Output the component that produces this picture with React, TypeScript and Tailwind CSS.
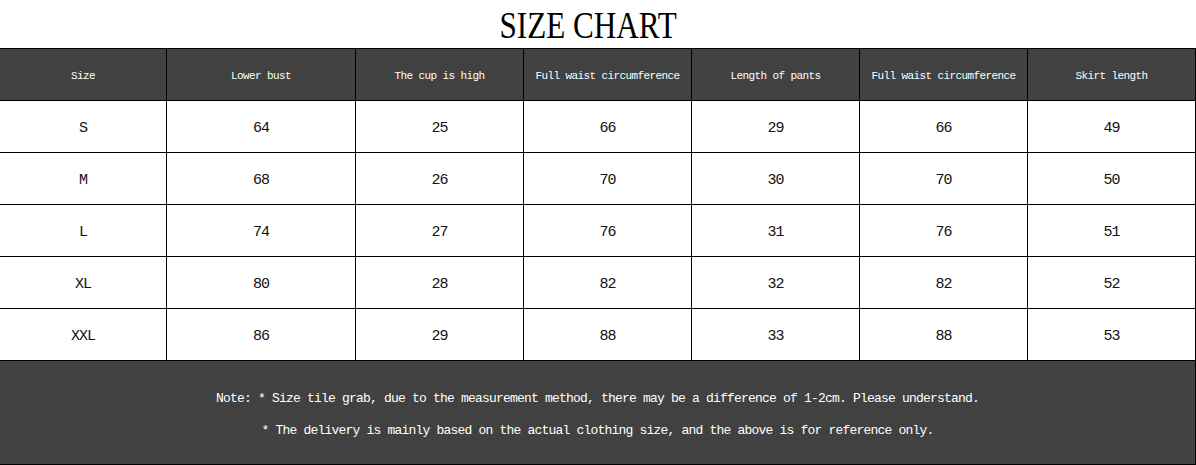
const HEADERS = [
  'Size',
  'Lower bust',
  'The cup is high',
  'Full waist circumference',
  'Length of pants',
  'Full waist circumference',
  'Skirt length',
];

const ROWS = [
  ['S', '64', '25', '66', '29', '66', '49'],
  ['M', '68', '26', '70', '30', '70', '50'],
  ['L', '74', '27', '76', '31', '76', '51'],
  ['XL', '80', '28', '82', '32', '82', '52'],
  ['XXL', '86', '29', '88', '33', '88', '53'],
];

export default function App() {
  return (
    <div className="w-[1196px] h-[465px] bg-white overflow-hidden font-['Liberation_Mono','DejaVu_Sans_Mono',monospace]">
      {/* title */}
      <div className="h-[48px] flex items-center justify-center pr-[20px]">
        <span className="inline-block text-[38px] leading-none text-black scale-x-[0.82] mt-[2px] font-['Liberation_Serif',serif]">
          SIZE CHART
        </span>
      </div>

      <div className="grid grid-cols-[167px_189px_168px_168px_168px_168px_168px] border-t border-black">
        {HEADERS.map((h, i) => (
          <div
            key={i}
            className="h-[52px] pt-[3px] bg-[#414141] border-r border-b border-black flex items-center justify-center text-white text-[11px] tracking-[-0.6px]"
          >
            {h}
          </div>
        ))}
        {ROWS.map((row, r) =>
          row.map((cell, c) => (
            <div
              key={`${r}-${c}`}
              className="h-[52px] pt-[6px] bg-white border-r border-b border-black flex items-center justify-center text-[#111] text-[15px] tracking-[-1px]"
            >
              {cell}
            </div>
          ))
        )}
      </div>

      {/* note */}
      <div className="h-[104px] pt-[4px] bg-[#414141] border-r border-b border-black flex flex-col items-center justify-center gap-[16px] text-white text-[13px] leading-[16px] tracking-[-0.8px] whitespace-pre">
        <p>Note: * Size tile grab, due to the measurement method, there may be a difference of 1-2cm. Please understand.</p>
        <p>* The delivery is mainly based on the actual clothing size, and the above is for reference only.</p>
      </div>
    </div>
  );
}
